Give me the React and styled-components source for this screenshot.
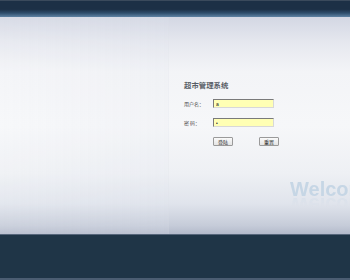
import React from 'react';
import styled, {createGlobalStyle} from 'styled-components';

const GlobalStyle = createGlobalStyle`
  html, body {
    margin: 0;
    padding: 0;
    background: #1f3547;
  }
  * {
    box-sizing: border-box;
  }
`;

const Page = styled.div`
  width: 350px;
  height: 280px;
  display: flex;
  flex-direction: column;
  overflow: hidden;
  font-family: "Liberation Sans", "Noto Sans CJK SC", sans-serif;
`;

const TopBar = styled.div`
  height: 17px;
  flex-shrink: 0;
  border-top: 1px solid #3a4a5c;
  background: linear-gradient(180deg, #1c3046 0%, #1c3046 52%, #2e4d6b 75%, #5f83a4 100%);
`;

const Stage = styled.div`
  flex: 1;
  position: relative;
  overflow: hidden;
  display: flex;
  flex-direction: column;
  padding: 63px 0 0 184px;
  background: linear-gradient(180deg, #d3d7e3 0%, #e6e8ef 12%, #f3f4f7 25%, #f6f7f9 50%, #eef0f4 72%, #e0e4ec 86%, #c6ccd9 96%, #b3bacb 100%);
`;

const Shade = styled.div`
  position: absolute;
  left: 0;
  top: 0;
  bottom: 0;
  width: 169px;
  border-right: 1px solid rgba(205, 210, 222, 0.18);
  background: linear-gradient(90deg, rgba(255, 255, 255, 0.1), rgba(225, 229, 238, 0.18));
  pointer-events: none;
`;

const Title = styled.h1`
  margin: 0;
  font-family: "Noto Sans CJK SC", sans-serif;
  font-size: 7.4px;
  font-weight: 700;
  line-height: 10px;
  color: #595f67;
  position: relative;
`;

const Form = styled.div`
  display: grid;
  grid-template-columns: 29px 61px;
  row-gap: 10px;
  margin-top: 9px;
  align-items: center;
  position: relative;
`;

const Label = styled.label`
  font-family: "Noto Sans CJK SC", sans-serif;
  font-size: 5px;
  color: #4a4a4a;
  white-space: pre;
`;

const Field = styled.input`
  width: 61px;
  height: 9px;
  margin: 0;
  padding: 0 0 0 2px;
  font-size: 5px;
  line-height: 7px;
  color: #222;
  background: #ffffb4;
  border-style: solid;
  border-width: 1px;
  border-color: #7a7a7a #d8d8d8 #d8d8d8 #7a7a7a;
  outline: none;
`;

const Buttons = styled.div`
  display: flex;
  gap: 26px;
  margin: 10px 0 0 29px;
  position: relative;
`;

const Button = styled.button`
  width: 20px;
  height: 9px;
  padding: 0;
  font-family: "Noto Sans CJK SC", sans-serif;
  font-size: 5px;
  line-height: 7px;
  color: #333;
  background: linear-gradient(180deg, #fafafa, #e4e4e4);
  border: 1px solid #9a9a9a;
  border-radius: 1px;
`;

const Welcome = styled.div`
  margin: 34px 0 0 106px;
  font-family: "Liberation Sans", sans-serif;
  font-size: 20px;
  font-weight: 700;
  line-height: 18px;
  color: #c6d6e5;
  white-space: nowrap;
  -webkit-box-reflect: below -2px linear-gradient(transparent 40%, rgba(255, 255, 255, 0.35));
`;

const BottomBar = styled.div`
  height: 46px;
  flex-shrink: 0;
  border-top: 1px solid #56667b;
  border-bottom: 2px solid #4b5d72;
  background: #1f3547;
`;

export default function App() {
  return (
    <Page>
      <GlobalStyle />
      <TopBar />
      <Stage>
        <Shade />
        <Title>超市管理系统</Title>
        <Form>
          <Label>用户名：</Label>
          <Field type="text" defaultValue="a" readOnly />
          <Label>{'密 码：'}</Label>
          <Field type="password" defaultValue="a" readOnly />
        </Form>
        <Buttons>
          <Button>登陆</Button>
          <Button>重置</Button>
        </Buttons>
        <Welcome>Welcome</Welcome>
      </Stage>
      <BottomBar />
    </Page>
  );
}
